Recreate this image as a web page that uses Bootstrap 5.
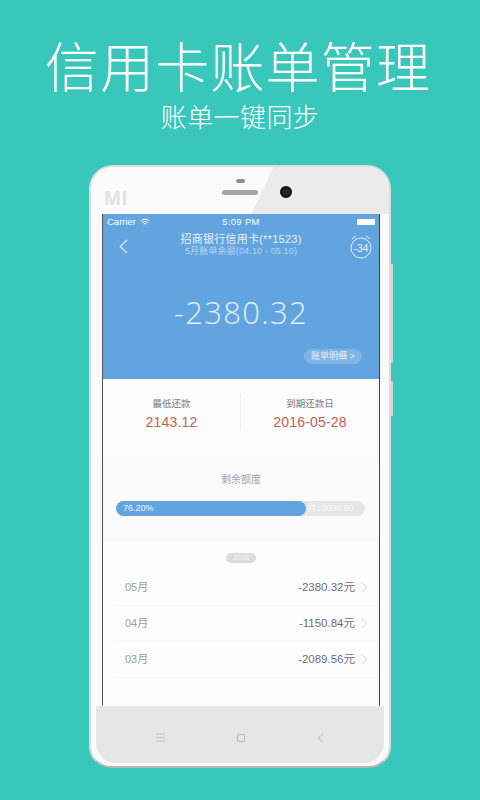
<!doctype html>
<html lang="zh"><head><meta charset="utf-8">
<link href="https://cdn.jsdelivr.net/npm/bootstrap@5.3.0/dist/css/bootstrap.min.css" rel="stylesheet">
<style>
html,body{height:800px;overflow:hidden}
body{background:#3ac7bb;font-family:"Liberation Sans","Noto Sans CJK SC",sans-serif;color:#fff}
.hero-title{font-size:54px;line-height:64px;letter-spacing:1.2px;font-weight:300;padding:33px 4px 0 0;margin:0;font-family:"Noto Sans CJK SC",sans-serif}
.hero-sub{font-size:26px;line-height:30px;letter-spacing:.4px;margin:4px 0 0;font-weight:300;font-family:"Noto Sans CJK SC",sans-serif}
.phone{width:302px;height:603px;margin:34px 0 0 89px;background:#fafafa;border:2px solid #dcdcdc;border-bottom-color:#b5b5b5;border-radius:24px 24px 22px 22px;position:relative}
.side-a,.side-b{position:absolute;right:-4px;width:2px;background:#d4d4d4}
.side-a{top:97px;height:99px}
.side-b{top:214px;height:35px}
.bezel-top{height:47px;background:linear-gradient(115deg,#fbfbfb 57%,#ebebeb 57%);position:relative;border-radius:22px 22px 0 0}
.logo-mi{position:absolute;left:13px;top:21px;font:700 20px/20px "Liberation Sans",sans-serif;letter-spacing:1px;color:#e2e2e2}
.pill-a{position:absolute;left:145px;top:12px;width:9px;height:4px;border-radius:2px;background:#8f8f8f}
.pill-b{position:absolute;left:131px;top:23px;width:36px;height:5px;border-radius:3px;background:#a5a5a5}
.lens{position:absolute;left:189px;top:19px;width:12px;height:12px;border-radius:50%;background:#1b2a22;border:2px solid #0d0d0d}
.screen{width:278px;height:492px;margin-left:11px;background:#fff;border-left:1px solid #555;border-right:1px solid #444;border-bottom:1px solid #bbb}
.blue{height:165px;background:#62a4e0;position:relative;padding-top:2px}
.status{font-size:9.5px;line-height:12px;padding:0 4px}
.status>span{flex:1 1 0}
.status-time{font-weight:400;letter-spacing:.3px}
.batt{width:18px;height:6px;background:#fff;border-radius:1px}
.nav-title{font-size:11px;line-height:14px;margin-top:4px;color:#eaf3fb;letter-spacing:.25px}
.nav-sub{font-size:9px;line-height:11px;color:#b9d6f1;letter-spacing:.15px}
.back{position:absolute;left:16px;top:25px}
.alarm{position:absolute;left:246px;top:20px}
.amount{font-size:31px;line-height:36px;margin-top:37px;font-weight:300;letter-spacing:1.3px;color:#e4effa;font-family:"Open Sans",sans-serif}
.detail{position:absolute;right:17px;top:135px;width:58px;height:15px;line-height:15px;font-size:9px;border-radius:8px;background:#7fb5e6;color:#e6f1fb;text-align:center}
.summary{height:81px;background:#fcfcfc;padding-top:15px}
.sum-cell{flex:1;text-align:center}
.sum-left{width:138px;flex:none;border-right:1px solid #f0f0f0;height:33px}
.sum-label{font-size:9.5px;line-height:20px;color:#77797c;height:20px}
.sum-val{font-size:14px;line-height:16px;color:#c4624f;letter-spacing:.2px}
.quota{height:83px;background:#fbfbfb;text-align:center;padding-top:12px}
.quota-t{font-size:10px;line-height:16px;color:#a5a5a5}
.track{height:15px;margin:13px 14px 0 13px;border-radius:8px;background:#e6e6e6;font-size:9px;line-height:15px;color:#f7f7f7}
.track-fill{width:76.4%;border-radius:8px;background:#62a4e0;color:#f2f8fd;text-align:left;padding-left:7px}
.track-rest{padding-left:1px}
.list-zone{background:#fdfdfd;height:163px;padding-top:10px}
.year-tag{width:30px;height:10px;line-height:10px;font-size:7.5px;border-radius:5px;background:#dcdcdc;color:#f5f5f5;margin:0 auto 7px}
.row-item{height:36px;margin-left:10px;padding:0 11px 0 12px;border-bottom:1px solid #f6f6f6;font-size:11px}
.m{color:#9a9ca0}.v{color:#6b6f78;font-size:11.5px}
.row-item .gap-1{gap:6px!important}
.bezel-bottom{height:57px;margin:0 5px;background:#e6e6e6;color:#b5b5b5;padding:6px 60px 0;border-radius:0 0 20px 20px}
</style></head><body>
<header class="text-center">
<h1 class="hero-title">信用卡账单管理</h1>
<p class="hero-sub">账单一键同步</p>
</header>
<div class="phone">
 <span class="side-a"></span><span class="side-b"></span>
 <div class="bezel-top"><span class="logo-mi">MI</span><span class="pill-a"></span><span class="pill-b"></span><span class="lens"></span></div>
 <div class="screen">
  <div class="blue text-center">
   <div class="status d-flex align-items-center">
     <span class="d-flex align-items-center gap-1">Carrier <svg width="10" height="8" viewBox="0 0 10 8" fill="none" stroke="#fff" stroke-width="1"><path d="M.7 3a6 6 0 0 1 8.6 0M2.2 4.6a4 4 0 0 1 5.6 0M3.7 6a2 2 0 0 1 2.6 0"/></svg></span>
     <span class="status-time">5:09 PM</span>
     <span class="d-flex justify-content-end"><span class="batt"></span></span>
   </div>
   <svg class="back" width="9" height="15" viewBox="0 0 9 15" fill="none" stroke="#e8f2fb" stroke-width="1.1"><path d="M8 .8 1.2 7.5 8 14.2"/></svg>
   <svg class="alarm" width="24" height="26" viewBox="0 0 24 26" fill="none" stroke="#e8f2fb" stroke-width="1"><circle cx="12" cy="14" r="10"/><path d="M3 5 7 2M21 5l-4-3"/><text x="12" y="18" font-size="10" text-anchor="middle" fill="#e8f2fb" stroke="none" font-family="Liberation Sans">-34</text></svg>
   <div class="nav-title">招商银行信用卡(**1523)</div>
   <div class="nav-sub">5月账单余额(04.10 - 05.10)</div>
   <div class="amount">-2380.32</div>
   <div class="detail">账单明细 &gt;</div>
  </div>
  <div class="summary d-flex">
    <div class="sum-cell sum-left"><div class="sum-label">最低还款</div><div class="sum-val">2143.12</div></div>
    <div class="sum-cell"><div class="sum-label">到期还款日</div><div class="sum-val">2016-05-28</div></div>
  </div>
  <div class="quota">
    <div class="quota-t">剩余额度</div>
    <div class="track d-flex"><div class="track-fill">76.20%</div><div class="track-rest">共10000.00</div></div>
  </div>
  <div class="list-zone">
    <div class="year-tag text-center">2016</div>
    <div class="row-item d-flex justify-content-between align-items-center"><span class="m">05月</span><span class="d-flex align-items-center gap-1"><span class="v">-2380.32元</span><svg width="7" height="11" viewBox="0 0 7 11" fill="none" stroke="#d5d5d5"><path d="m1 1 5 4.5L1 10"/></svg></span></div>
    <div class="row-item d-flex justify-content-between align-items-center"><span class="m">04月</span><span class="d-flex align-items-center gap-1"><span class="v">-1150.84元</span><svg width="7" height="11" viewBox="0 0 7 11" fill="none" stroke="#d5d5d5"><path d="m1 1 5 4.5L1 10"/></svg></span></div>
    <div class="row-item d-flex justify-content-between align-items-center"><span class="m">03月</span><span class="d-flex align-items-center gap-1"><span class="v">-2089.56元</span><svg width="7" height="11" viewBox="0 0 7 11" fill="none" stroke="#d5d5d5"><path d="m1 1 5 4.5L1 10"/></svg></span></div>
  </div>
 </div>
 <div class="bezel-bottom d-flex justify-content-between align-items-center">
   <svg width="9" height="9" viewBox="0 0 9 9" stroke="#c2c2c2" fill="none"><path d="M0 1h9M0 4.5h9M0 8h9"/></svg>
   <svg width="8" height="8" viewBox="0 0 8 8" stroke="#b5b5b5" fill="none"><rect x=".5" y=".5" width="7" height="7" rx="1.5"/></svg>
   <svg width="7" height="10" viewBox="0 0 7 10" stroke="#b5b5b5" fill="none"><path d="M6 1 1 5l5 4"/></svg>
 </div>
</div>
</body></html>
